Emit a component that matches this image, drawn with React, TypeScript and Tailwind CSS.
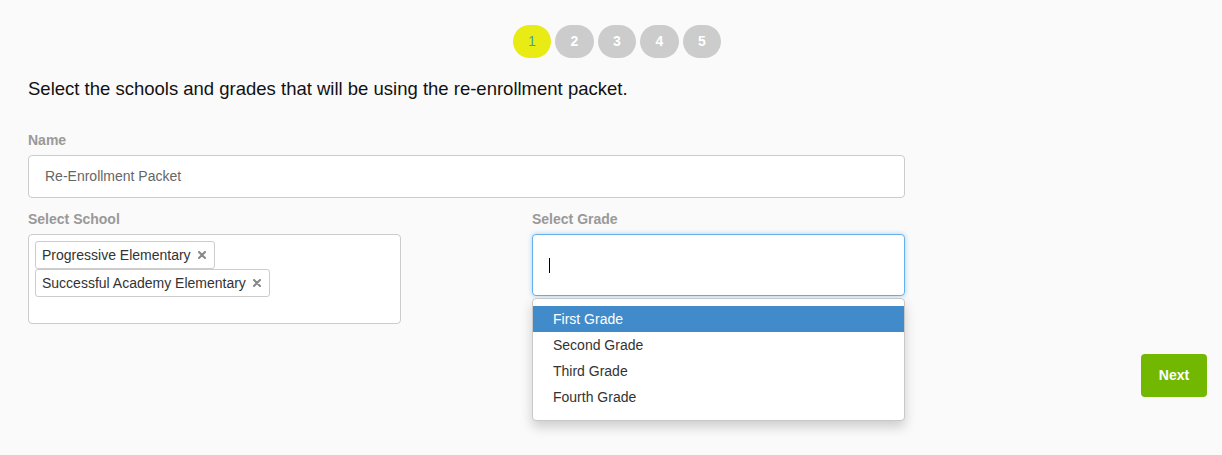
import React from "react";

const steps = [1, 2, 3, 4, 5];
const schools = ["Progressive Elementary", "Successful Academy Elementary"];
const grades = ["First Grade", "Second Grade", "Third Grade", "Fourth Grade"];

function Stepper({ current }: { current: number }) {
  return (
    <div className="flex justify-center pl-[12px] pt-[25px]">
      <div className="flex gap-1">
        {steps.map((n) => (
          <div
            key={n}
            className={
              n === current
                ? "flex h-[33px] w-[38.5px] items-center justify-center rounded-full bg-[#e8eb14] text-[14px] text-[#3fa0c4]"
                : "flex h-[33px] w-[38.5px] items-center justify-center rounded-full bg-[#cccccc] text-[14px] font-bold text-white"
            }
          >
            {n}
          </div>
        ))}
      </div>
    </div>
  );
}

function Tag({ label }: { label: string }) {
  return (
    <div className="flex h-[28px] w-fit items-center rounded-[3px] border border-[#cccccc] bg-white pl-[6px] pr-[8px] text-[14px] text-[#333]">
      <span>{label}</span>
      {/* remove icon */}
      <svg className="ml-[7px]" width="8" height="8" viewBox="0 0 8 8">
        <path d="M1 1L7 7M7 1L1 7" stroke="#888" strokeWidth="2" strokeLinecap="round" />
      </svg>
    </div>
  );
}

export default function App() {
  return (
    <div
      className="min-h-[455px] bg-[#fafafa] text-[#111]"
      style={{ fontFamily: '"Liberation Sans", Arial, Helvetica, sans-serif' }}
    >
      <Stepper current={1} />

      <div className="px-[28px]">
        <h1 className="mt-[21px] text-[18.5px] leading-[20px] text-[#111]">
          Select the schools and grades that will be using the re-enrollment packet.
        </h1>

        <div className="w-[877px]">
          <label className="mt-[31px] mb-[5px] block text-[14px] leading-[20px] font-bold text-[#999]">Name</label>
          <div className="flex h-[43px] items-center rounded-[4px] border border-[#cccccc] bg-white pl-[16px] text-[14px] text-[#666]">
            Re-Enrollment Packet
          </div>

          <div className="mt-[11px] flex justify-between">
            <div className="w-[373px]">
              <label className="mb-[5px] block text-[14px] leading-[20px] font-bold text-[#999]">Select School</label>
              <div className="h-[90px] rounded-[4px] border border-[#cccccc] bg-white pl-[6px] pt-[6px]">
                {schools.map((s) => (
                  <Tag key={s} label={s} />
                ))}
              </div>
            </div>

            <div className="relative w-[373px]">
              <label className="mb-[5px] block text-[14px] leading-[20px] font-bold text-[#999]">Select Grade</label>
              <div className="flex h-[62px] items-center rounded-[4px] border border-[#66afe9] bg-white pl-[16px] shadow-[0_0_5px_rgba(102,175,233,0.55)]">
                <span className="h-[15px] w-px bg-black" />
              </div>
              <ul className="absolute top-[89px] left-0 right-0 z-10 rounded-[4px] border border-[#c8c8c8] bg-white pt-[7px] pb-[10px] text-[14px] text-[#333] shadow-[0_6px_12px_rgba(0,0,0,0.18)]">
                {grades.map((g, i) => (
                  <li
                    key={g}
                    className={
                      i === 0
                        ? "flex h-[26px] items-center bg-[#428bca] pl-[20px] text-white"
                        : "flex h-[26px] items-center pl-[20px]"
                    }
                  >
                    {g}
                  </li>
                ))}
              </ul>
            </div>
          </div>
        </div>
      </div>

      <div className="mt-[30px] flex justify-end pr-[15px]">
        <button className="h-[43px] w-[66px] rounded-[4px] bg-[#72b800] text-[14px] font-bold text-white">Next</button>
      </div>
    </div>
  );
}
